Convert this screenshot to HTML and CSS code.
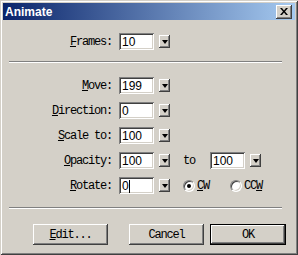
FILE: index.html
```html
<!DOCTYPE html>
<html lang="en">
<head>
    <meta charset="UTF-8">
    <title>Animate</title>
    <link rel="stylesheet" href="styles.css">
</head>
<body>
    <div class="window">
        <div class="titlebar">
            <span class="title">Animate</span>
            <span class="close">
                <svg width="8" height="7" viewBox="0 0 8 7"><path d="M0 0h2l2 2.5L6 0h2L5 3.5 8 7H6L4 4.5 2 7H0l3-3.5z" fill="#000"/></svg>
            </span>
        </div>

        <div class="body">
            <!-- frames -->
            <div class="row first">
                <label class="label"><u>F</u>rames:</label>
                <span class="field">10</span>
                <span class="drop"><i></i></span>
            </div>

            <div class="sep top-sep"></div>

            <div class="rows">
                <div class="row">
                    <label class="label"><u>M</u>ove:</label>
                    <span class="field">199</span>
                    <span class="drop"><i></i></span>
                </div>
                <div class="row">
                    <label class="label"><u>D</u>irection:</label>
                    <span class="field">0</span>
                    <span class="drop"><i></i></span>
                </div>
                <div class="row">
                    <label class="label"><u>S</u>cale to:</label>
                    <span class="field">100</span>
                    <span class="drop"><i></i></span>
                </div>
                <div class="row">
                    <label class="label"><u>O</u>pacity:</label>
                    <span class="field">100</span>
                    <span class="drop"><i></i></span>
                    <span class="to">to</span>
                    <span class="field">100</span>
                    <span class="drop"><i></i></span>
                </div>
                <div class="row">
                    <label class="label"><u>R</u>otate:</label>
                    <span class="field">0<b class="caret"></b></span>
                    <span class="drop"><i></i></span>
                    <span class="radio checked"></span>
                    <span class="radio-label"><u>C</u>W</span>
                    <span class="radio second"></span>
                    <span class="radio-label">CC<u>W</u></span>
                </div>
            </div>

            <div class="sep bottom-sep"></div>

            <div class="buttons">
                <button class="btn"><u>E</u>dit...</button>
                <button class="btn">Cancel</button>
                <button class="btn default">OK</button>
            </div>
        </div>
    </div>
</body>
</html>
```

FILE: styles.css
```css
body {
    margin: 0;
    background-color: #d4d0c8;
}

.window {
    width: 298px;
    height: 255px;
    box-sizing: border-box;
    padding: 3px;
    background-color: #d4d0c8;
    box-shadow: inset 1px 1px #d4d0c8, inset -1px -1px #404040,
                inset 2px 2px #fff, inset -2px -2px #808080;
    font-family: "Liberation Mono", monospace;
    font-size: 12px;
    letter-spacing: -1.2px;
    color: #000;
}

.titlebar {
    height: 17px;
    display: flex;
    align-items: center;
    justify-content: space-between;
    padding: 0 3px 0 2px;
    background: linear-gradient(to right, #0a246a, #a6caf0);
}

.title {
    font-family: "Liberation Sans", Arial, sans-serif;
    font-weight: bold;
    font-size: 12px;
    letter-spacing: 0;
    color: #fff;
}

.close {
    width: 16px;
    height: 14px;
    display: flex;
    align-items: center;
    justify-content: center;
    background-color: #d4d0c8;
    box-shadow: inset -1px -1px #404040, inset 1px 1px #fff,
                inset -2px -2px #808080, inset 2px 2px #d4d0c8;
}

.body {
    display: flex;
    flex-direction: column;
}

.row {
    display: flex;
    align-items: center;
    height: 17px;
}

.row.first {
    margin-top: 13px;
}

.rows {
    display: flex;
    flex-direction: column;
    gap: 8px;
    margin-top: 14px;
}

.label {
    width: 109px;
    text-align: right;
    margin-right: 7px;
}

.field {
    width: 35px;
    height: 17px;
    box-sizing: border-box;
    padding: 1px 0 0 3px;
    display: flex;
    align-items: center;
    background-color: #fff;
    box-shadow: inset 1px 1px #808080, inset -1px -1px #fff,
                inset 2px 2px #404040, inset -2px -2px #d4d0c8;
    font-family: "Liberation Sans", Arial, sans-serif;
    font-size: 12px;
    letter-spacing: 0;
}

.caret {
    width: 1px;
    height: 13px;
    background-color: #000;
}

.drop {
    width: 11px;
    height: 13px;
    margin-left: 5px;
    display: flex;
    align-items: center;
    justify-content: center;
    box-shadow: inset -1px -1px #404040, inset 1px 1px #fff,
                inset -2px -2px #808080, inset 2px 2px #d4d0c8;
}

.drop i {
    width: 0;
    height: 0;
    border-left: 3px solid transparent;
    border-right: 3px solid transparent;
    border-top: 4px solid #000;
    margin-top: 1px;
}

.to {
    margin: 0 15px 0 13px;
}

.radio {
    width: 12px;
    height: 12px;
    margin-left: 13px;
    box-sizing: border-box;
    border-radius: 50%;
    background-color: #fff;
    border: 1px solid;
    border-color: #808080 #fff #fff #808080;
    box-shadow: inset 1px 1px #404040, inset -1px -1px #d4d0c8;
    position: relative;
}

.radio.second {
    margin-left: 21px;
}

.radio.checked::after {
    content: "";
    position: absolute;
    left: 3px;
    top: 3px;
    width: 4px;
    height: 4px;
    border-radius: 50%;
    background-color: #000;
}

.radio-label {
    margin-left: 2px;
}

.sep {
    width: 273px;
    height: 1px;
    margin-left: 6px;
    border-top: 1px solid #808080;
    border-bottom: 1px solid #fff;
    height: 0;
}

.top-sep {
    margin-top: 11px;
}

.bottom-sep {
    margin-top: 13px;
}

.buttons {
    display: flex;
    margin-top: 15px;
    padding-left: 30px;
}

.btn {
    width: 75px;
    height: 21px;
    padding: 0;
    border: none;
    background-color: #d4d0c8;
    font-family: "Liberation Mono", monospace;
    font-size: 12px;
    letter-spacing: -1.2px;
    color: #000;
    box-shadow: inset -1px -1px #404040, inset 1px 1px #fff,
                inset -2px -2px #808080, inset 2px 2px #d4d0c8;
}

.btn + .btn {
    margin-left: 21px;
}

.btn.default {
    width: 76px;
    margin-left: 6px;
    border: 1px solid #000;
}
```
